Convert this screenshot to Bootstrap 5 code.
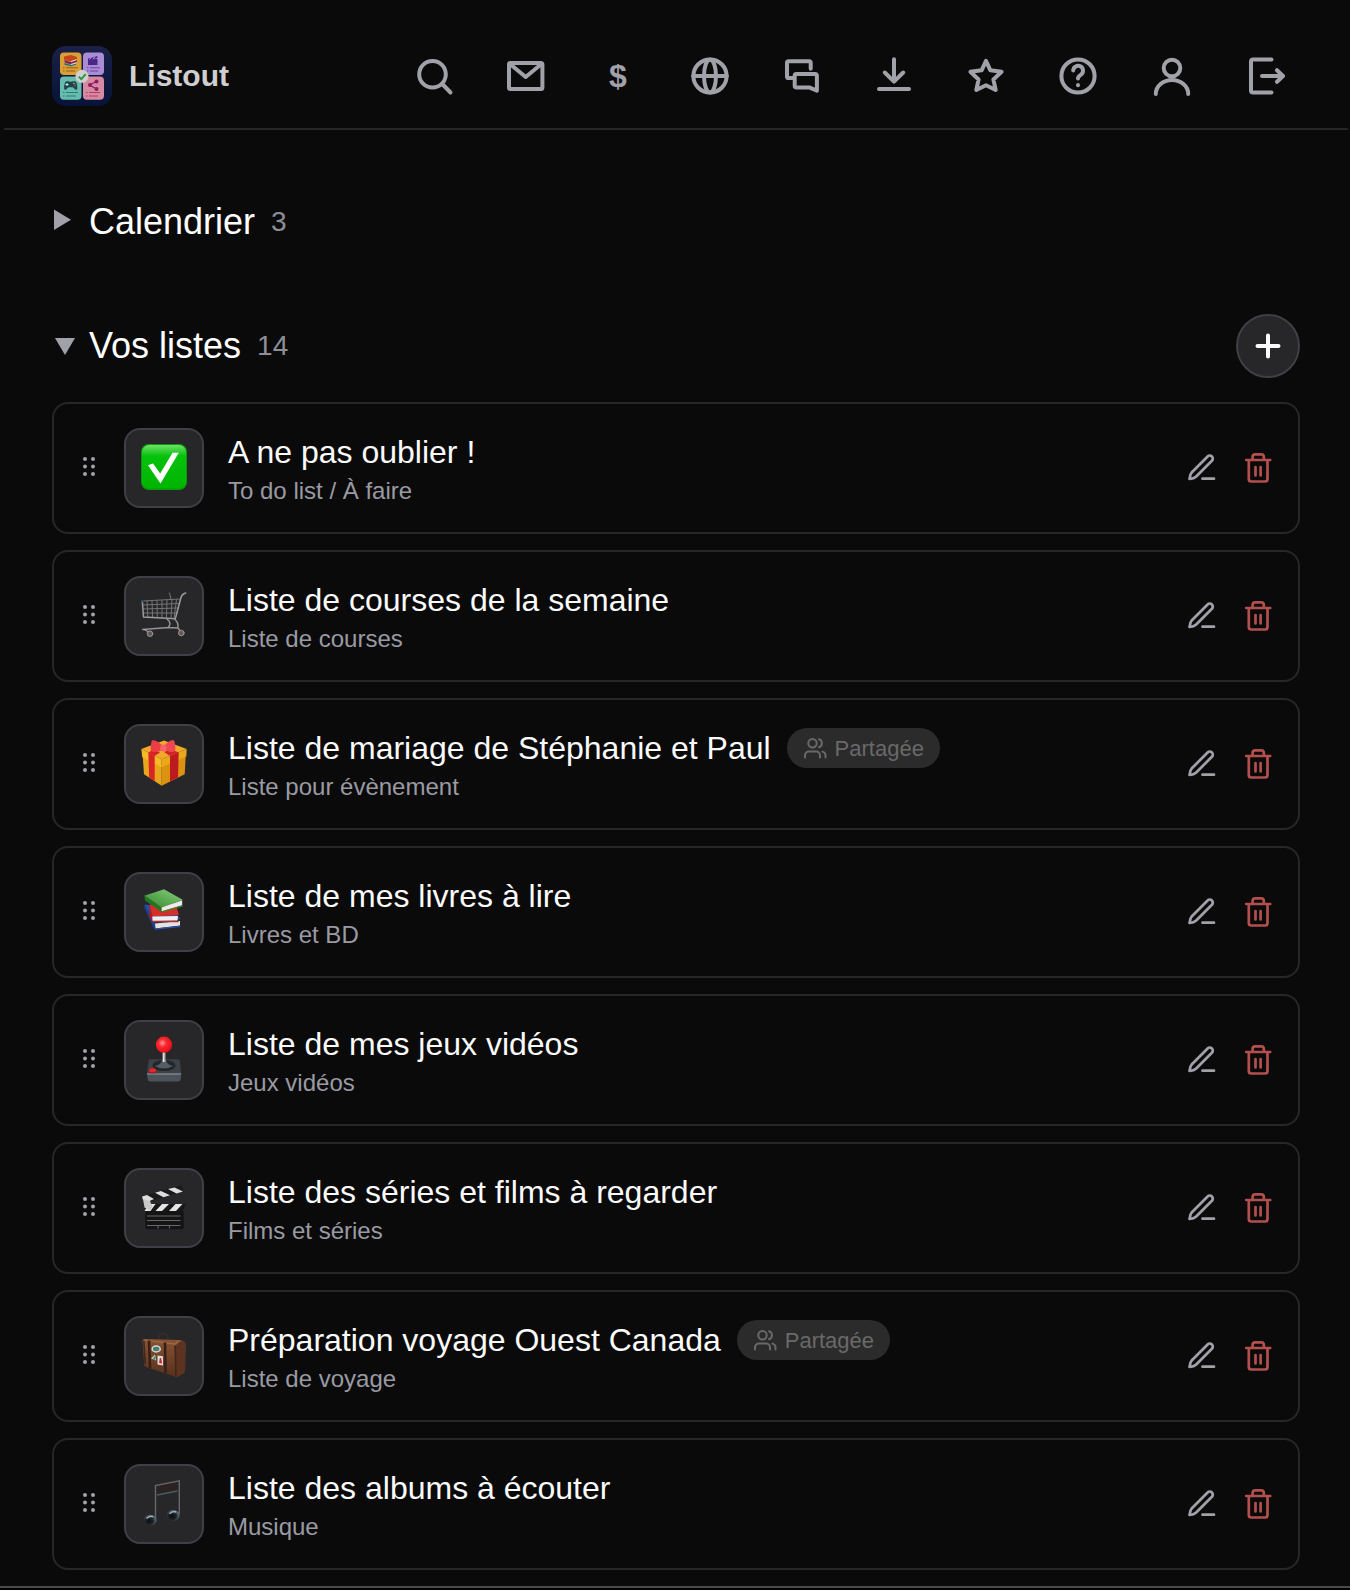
<!DOCTYPE html>
<html lang="fr" data-bs-theme="dark">
<head>
    <meta charset="UTF-8">
    <meta name="viewport" content="width=device-width, initial-scale=1.0">
    <title>Listout</title>
    <link href="https://cdn.jsdelivr.net/npm/bootstrap@5.3.2/dist/css/bootstrap.min.css" rel="stylesheet">
    <style>
        body {
            background: #0a0a0a;
            color: #fafafa;
            font-family: "Liberation Sans", Arial, sans-serif;
        }
        svg {
            display: block;
            overflow: visible;
        }
        button {
            padding: 0;
            border: 0;
            background: none;
            color: inherit;
        }
        .page {
            margin: 0 2px 0 4px;
        }
        .topbar {
            padding: 46px 64px 22px 48px;
            border-bottom: 2px solid #27272a;
        }
        .brand {
            font-size: 30px;
            line-height: 40px;
            font-weight: 700;
            color: #cfcfd1;
            gap: 17px;
        }
        .tools {
            gap: 48px;
            color: #a1a1aa;
        }
        .tools a {
            color: inherit;
            width: 44px;
            height: 44px;
        }
        .tools svg,
        .stroke-icon {
            fill: none;
            stroke: currentColor;
            stroke-width: 4;
            stroke-linecap: round;
            stroke-linejoin: round;
        }
        .dollar {
            font-size: 32px;
            line-height: 44px;
            font-weight: 700;
        }
        .content {
            padding: 60px 48px 16px;
        }
        .section-head {
            height: 64px;
        }
        .section-head + .section-head {
            margin-top: 60px;
        }
        .section-toggle {
            gap: 13px;
        }
        .section-toggle svg {
            fill: #a1a1aa;
        }
        .section-head h2 {
            font-size: 36px;
            line-height: 44px;
            font-weight: 400;
        }
        .count {
            font-size: 28px;
            line-height: 32px;
            color: #8e8e97;
        }
        .add-btn {
            width: 64px;
            height: 64px;
            border: 2px solid #3f3f46;
            background: #27272a;
        }
        .lists {
            margin-top: 24px;
            gap: 16px;
        }
        .list-row {
            padding: 24px;
            gap: 24px;
            border: 2px solid #27272a;
            border-radius: 16px;
        }
        .grip {
            width: 22px;
            fill: #a1a1aa;
            cursor: grab;
        }
        .tile {
            width: 80px;
            height: 80px;
            border: 2px solid #3f3f46;
            border-radius: 16px;
            background: #27272a;
        }
        .texts {
            padding-top: 4px;
        }
        .list-name {
            font-size: 32px;
            line-height: 40px;
            color: #fafafa;
        }
        .kind {
            margin-top: 4px;
            font-size: 24px;
            line-height: 30px;
            color: #9a9aa3;
        }
        .shared {
            height: 40px;
            padding: 0 16px;
            gap: 8px;
            font-size: 22px;
            color: #696969;
            background: #2b2b2b;
        }
        .shared .stroke-icon {
            stroke-width: 2;
        }
        .actions {
            gap: 24px;
            color: #a1a1aa;
        }
        .actions .stroke-icon {
            stroke-width: 2.7;
        }
        .delete {
            color: #b3504e;
        }
        .bottom-edge {
            height: 4px;
            border-top: 2px solid #4a4a4a;
            background: #000;
        }
    </style>
</head>
<body>
    <!-- shared icons -->
    <svg width="0" height="0" class="position-absolute" aria-hidden="true">
        <defs>
            <linearGradient id="gGreen" x1="0" y1="0" x2="0" y2="1">
                <stop offset="0" stop-color="#6fe06a"/><stop offset=".25" stop-color="#06c20c"/><stop offset="1" stop-color="#00b400"/>
            </linearGradient>
            <radialGradient id="gBall" cx=".4" cy=".4" r=".6">
                <stop offset="0" stop-color="#ff9c98"/><stop offset=".4" stop-color="#fb2a2f"/><stop offset="1" stop-color="#e50d1a"/>
            </radialGradient>
            <linearGradient id="gBook" x1="0" y1="1" x2="1" y2="0">
                <stop offset="0" stop-color="#2e8a2c"/><stop offset="1" stop-color="#8ccf7d"/>
            </linearGradient>
            <linearGradient id="gCase" x1="0" y1="0" x2="0" y2="1">
                <stop offset="0" stop-color="#8a5434"/><stop offset="1" stop-color="#56301c"/>
            </linearGradient>
            <radialGradient id="gNote" cx=".4" cy=".6" r=".6">
                <stop offset="0" stop-color="#0b0d0f"/><stop offset=".55" stop-color="#1d2429"/><stop offset="1" stop-color="#60727c"/>
            </radialGradient>
            <linearGradient id="gLogo" x1="0" y1="0" x2="0" y2="1">
                <stop offset="0" stop-color="#1b2047"/><stop offset="1" stop-color="#07133a"/>
            </linearGradient>
        </defs>
        <symbol id="grip" viewBox="0 0 22 24">
            <circle cx="7" cy="3" r="2"/><circle cx="15" cy="3" r="2"/>
            <circle cx="7" cy="10.500" r="2"/><circle cx="15" cy="10.500" r="2"/>
            <circle cx="7" cy="18" r="2"/><circle cx="15" cy="18" r="2"/>
        </symbol>
        <symbol id="pen" viewBox="0 0 32 32">
            <path d="M21.600 4.500a3 3 0 0 1 4.300 4.300L10.200 24.500c-1.800 1.700-4 2.200-6.700 2.400.2-2.700.8-4.900 2.400-6.700zM16.500 26.700H28"/>
        </symbol>
        <symbol id="bin" viewBox="0 0 32 32">
            <path d="M4.200 8H28.200M6.800 8V27a2.500 2.500 0 0 0 2.500 2.500H23a2.500 2.500 0 0 0 2.500-2.500V8M10.600 8V5a2.600 2.600 0 0 1 2.600-2.600h6A2.600 2.600 0 0 1 21.800 5V8M13.500 15v8.500M18.600 15v8.500"/>
        </symbol>
        <symbol id="people" viewBox="0 0 24 24">
            <path d="M17 21.500v-2a4 4 0 0 0-4-4H6a4 4 0 0 0-4 4v2M22.500 21.500v-2a4 4 0 0 0-3-3.900M16 3.200a4.200 4.200 0 0 1 0 8"/>
            <circle cx="9.500" cy="7.200" r="4.200"/>
        </symbol>
    </svg>

    <div class="page">
        <header class="topbar d-flex align-items-center justify-content-between">
            <a href="#" class="brand d-flex align-items-center text-decoration-none">
                <svg width="60" height="60" viewBox="0 0 60 60" aria-hidden="true">
                    <rect width="60" height="60" rx="14" fill="url(#gLogo)"/>
                    <rect x="8" y="6.500" width="21.500" height="22.500" rx="4" fill="#d9a036"/>
                    <rect x="31" y="6.500" width="21" height="22.500" rx="4" fill="#a98bd6"/>
                    <rect x="8" y="30.500" width="21.500" height="23.200" rx="4" fill="#68bcae"/>
                    <rect x="31" y="30.500" width="21" height="23.200" rx="4" fill="#d68aa2"/>
                    <path d="M12 10.500l7-1.500 6 2-7 2.500zM12 10.500v3l6 2 7-2.500v-2l-7 2.500z" fill="#c9431c"/>
                    <path d="M12.500 14l5.500 2 7-2.300v2l-7 2.500-5.500-2z" fill="#7a2462"/>
                    <path d="M12.500 17l5.500 1.800 6-2v2l-5 1.400-6.500-1.500z" fill="#176e80"/>
                    <path d="M19 15.500l5.500-1.700M19 18.500l5.500-1.500" stroke="#e8d8c0" stroke-width="1"/>
                    <path d="M36 13h9.500v6H36zM36 12.500l9-2.500.5 2-9 2z" fill="#482684"/>
                    <path d="M37.500 13.500l2-2.500M41 13.300l2-3" stroke="#b9a4e0" stroke-width="1"/>
                    <path d="M14 35.500c2-.8 3 .3 4.700.3s3-1.100 4.800-.3c1.600.8 2.700 8 1 8.300-1.800.3-2.600-2.600-3.800-2.600h-4c-1.200 0-2 2.900-3.700 2.600-1.700-.3-.7-7.500 1-8.300z" fill="#18474f"/>
                    <path d="M15 37v3M13.500 38.500h3" stroke="#cfe6e1" stroke-width="1"/>
                    <circle cx="22" cy="37.500" r=".8" fill="#e5b73a"/><circle cx="23" cy="39.500" r=".8" fill="#d6533b"/>
                    <path d="M44.500 35.500L37.500 39l7 4" stroke="#8c1c64" stroke-width="1.200" fill="none"/>
                    <circle cx="44.500" cy="35.500" r="2" fill="#8c1c64"/><circle cx="38" cy="39" r="2" fill="#8c1c64"/><circle cx="44.500" cy="43" r="2" fill="#8c1c64"/>
                    <path d="M11 21.700h1.500M14 21.700h12M11 25h1.500M14 25h9" stroke="#9b5c19" stroke-width="1.100"/>
                    <path d="M35 21.700h1.500M38 21.700h10M35 25h1.500M38 25h8" stroke="#6c45a0" stroke-width="1.100"/>
                    <path d="M11 46.500h1.500M14 46.500h12M11 50h1.500M14 50h10" stroke="#267f77" stroke-width="1.100"/>
                    <path d="M34 46.500h1.500M37 46.500h11M34 50h1.500M37 50h9" stroke="#b93861" stroke-width="1.100"/>
                    <circle cx="30" cy="30.300" r="6.500" fill="#cfcfcf"/>
                    <path d="M26.800 30.600l2.500 2.500 4.300-5" stroke="#249541" stroke-width="1.800" fill="none"/>
                </svg>
                <span>Listout</span>
            </a>
            <nav class="tools d-flex align-items-center" aria-label="Outils">
                <a href="#" aria-label="Rechercher"><svg width="44" height="44" viewBox="-2 -2 44 44"><circle cx="18.500" cy="18.200" r="13.300"/><path d="M28.300 28l8.200 8.500"/></svg></a>
                <a href="#" aria-label="Messages"><svg width="44" height="44" viewBox="-2 -2 44 44"><rect x="3" y="7" width="33.400" height="26" rx="1.500"/><path d="M4 8l15.700 13L35.400 8"/></svg></a>
                <a href="#" aria-label="Dons" class="dollar text-center text-decoration-none">$</a>
                <a href="#" aria-label="Langue"><svg width="44" height="44" viewBox="-2 -2 44 44"><circle cx="20" cy="20" r="16.600"/><ellipse cx="20" cy="20" rx="6" ry="16.600"/><path d="M3.200 20h33.600"/></svg></a>
                <a href="#" aria-label="Discussions"><svg width="44" height="44" viewBox="-2 -2 44 44"><path d="M28.700 12.800V6.800a1.600 1.600 0 0 0-1.600-1.600H6.600A1.600 1.600 0 0 0 5 6.800v13.600a1.600 1.600 0 0 0 1.600 1.600h4.600M14.300 18h19a1.600 1.600 0 0 1 1.600 1.600V34.800l-7-3.200H14.300a1.600 1.600 0 0 1-1.600-1.600V19.600a1.600 1.600 0 0 1 1.600-1.600z"/></svg></a>
                <a href="#" aria-label="Installer"><svg width="44" height="44" viewBox="-2 -2 44 44"><path d="M20 3.300V25.500M10.800 16.500L20 25.700l9.200-9.200M5 33h30"/></svg></a>
                <a href="#" aria-label="Favoris"><svg width="44" height="44" viewBox="-2 -2 44 44"><path d="M20 4.800l4.400 9.500 11.200 1.500-8.200 7.700 2.300 10.500L20 29.300l-9.700 4.700 2.300-10.500-8.200-7.700 11.200-1.500z"/></svg></a>
                <a href="#" aria-label="Aide"><svg width="44" height="44" viewBox="-2 -2 44 44"><circle cx="20" cy="20" r="16.600"/><path d="M15.200 14.400a4.900 4.900 0 1 1 7.800 4.200c-1.800 1.200-3 2-3 3.800M20 29v.200"/></svg></a>
                <a href="#" aria-label="Profil"><svg width="44" height="44" viewBox="-4 -2 44 44"><circle cx="20" cy="12" r="8.300"/><path d="M3.800 38a16.200 14 0 0 1 32.400 0"/></svg></a>
                <a href="#" aria-label="Se déconnecter"><svg width="44" height="44" viewBox="-6 -2 44 44"><path d="M25.500 3.400H7a2 2 0 0 0-2 2V34.600a2 2 0 0 0 2 2H25.500M16 20H36.800M31 14.200l6 5.800-6 5.800"/></svg></a>
            </nav>
        </header>

        <main class="content">
            <div class="section-head d-flex align-items-center gap-3">
                <button type="button" class="section-toggle d-flex align-items-center" aria-expanded="false">
                    <svg width="24" height="28" viewBox="0 0 24 28" aria-hidden="true"><path d="M2 1.500V22L19 11.700z"/></svg>
                    <h2 class="m-0">Calendrier</h2>
                </button>
                <span class="count">3</span>
            </div>
            <div class="section-head d-flex align-items-center gap-3">
                <button type="button" class="section-toggle d-flex align-items-center" aria-expanded="true">
                    <svg width="24" height="28" viewBox="0 0 24 28" aria-hidden="true"><path d="M3 6H23L13 23z"/></svg>
                    <h2 class="m-0">Vos listes</h2>
                </button>
                <span class="count">14</span>
                <button type="button" class="add-btn rounded-circle d-flex align-items-center justify-content-center ms-auto" aria-label="Ajouter une liste">
                    <svg class="stroke-icon" width="28" height="28" viewBox="0 0 28 28"><path d="M14 3.500v21M3.500 14h21"/></svg>
                </button>
            </div>

            <div class="lists d-flex flex-column">
                <article class="list-row d-flex align-items-center">
                    <svg class="grip" height="24"><use href="#grip"/></svg>
                    <div class="tile d-flex align-items-center justify-content-center flex-shrink-0">
                        <svg width="48" height="48" viewBox="0 0 48 48">
                            <rect x="1" y="0" width="46" height="46" rx="8" fill="#079c07"/>
                            <rect x="2" y="1" width="44" height="43.500" rx="7" fill="url(#gGreen)"/>
                            <path d="M8 21.300l5-1.700 7.200 10L32.500 8.700h6.300L20.500 39.500z" fill="#fff"/>
                        </svg>
                    </div>
                    <div class="texts align-self-start flex-grow-1">
                        <a href="#" class="list-name d-block text-decoration-none">A ne pas oublier !</a>
                        <div class="kind">To do list / À faire</div>
                    </div>
                    <div class="actions d-flex">
                        <button type="button" aria-label="Modifier"><svg class="stroke-icon" width="32" height="32"><use href="#pen"/></svg></button>
                        <button type="button" class="delete" aria-label="Supprimer"><svg class="stroke-icon" width="32" height="32"><use href="#bin"/></svg></button>
                    </div>
                </article>

                <article class="list-row d-flex align-items-center">
                    <svg class="grip" height="24"><use href="#grip"/></svg>
                    <div class="tile d-flex align-items-center justify-content-center flex-shrink-0">
                        <svg width="48" height="48" viewBox="0 0 48 48" fill="none" stroke-linecap="round">
                            <path d="M2.500 9L40 7M2.500 13l37 -1.500M3 17l35.500-1M3 21l34.500 0M7 9l.8 16M12 9l.6 16M17 8.500l.3 17M22 8.500v17.300M27 8l-.5 18M32 7.500L31 26.500M36.500 7.500L34 27M29.500 1l1.500 6" stroke="#747476" stroke-width="1"/>
                            <path d="M45.700 1c-3 .8-4.300 2.500-5 5.500l-5.400 20.200L3.500 25 2.300 9" stroke="#9b9b9d" stroke-width="1.500"/>
                            <path d="M34.500 27c2.500 2 4 4 3.500 9M27 27c4 3 3.500 6 1 8.500L2.700 37.500M28 35.500l10 .5 3 4" stroke="#929294" stroke-width="1.500"/>
                            <circle cx="10" cy="41.700" r="2.800" fill="#655a57" stroke="#9c938f"/><circle cx="41.300" cy="41" r="2.800" fill="#655a57" stroke="#9c938f"/>
                            <path d="M4 37.500l4 2" stroke="#bbb"/><circle cx="3" cy="9" r="1.300" fill="#25516b"/>
                        </svg>
                    </div>
                    <div class="texts align-self-start flex-grow-1">
                        <a href="#" class="list-name d-block text-decoration-none">Liste de courses de la semaine</a>
                        <div class="kind">Liste de courses</div>
                    </div>
                    <div class="actions d-flex">
                        <button type="button" aria-label="Modifier"><svg class="stroke-icon" width="32" height="32"><use href="#pen"/></svg></button>
                        <button type="button" class="delete" aria-label="Supprimer"><svg class="stroke-icon" width="32" height="32"><use href="#bin"/></svg></button>
                    </div>
                </article>

                <article class="list-row d-flex align-items-center">
                    <svg class="grip" height="24"><use href="#grip"/></svg>
                    <div class="tile d-flex align-items-center justify-content-center flex-shrink-0">
                        <svg width="48" height="48" viewBox="0 0 48 48">
                            <path d="M2.700 16l19 9v20.700L4 34.300z" fill="#e9a51c"/>
                            <path d="M21.700 25l24-9-1 18.300-23 11.400z" fill="#dc9211"/>
                            <path d="M1.300 9L24 .5 46.700 9l-25 10.300z" fill="#f2a929"/>
                            <path d="M1.300 9l20.400 10.300v8L2.300 17.300z" fill="#f7ba27"/>
                            <path d="M21.700 19.300L46.700 9l-.4 7.500-24.600 10.800z" fill="#eaa81b"/>
                            <path d="M8.300 12.500l6.400 3.300v25.400l-5.500-3.500z" fill="#d92325"/>
                            <path d="M30 15.900l8.700-3.600-.7 25.300-8 4z" fill="#bd1a20"/>
                            <path d="M8.300 12.500L14 9.500l6 3-5.300 3.300zM30 15.900l-6-4 6-2.500 8.700 2.900z" fill="#d42327"/>
                            <path d="M22.500 5.500C17 .5 12-1 11.500 1.500c-.2 3-1.500 6.500-.5 9.500 4 2 9 .5 12-1.800z" fill="#ed3e46"/>
                            <path d="M24.500 5.500C29 0 34-1 34.500 1.500c.3 3 1.700 6.500.5 9.500-4 2-8 .3-11-2z" fill="#f04850"/>
                            <ellipse cx="23.300" cy="8" rx="3.200" ry="3.500" fill="#f8646a"/>
                        </svg>
                    </div>
                    <div class="texts align-self-start flex-grow-1">
                        <div class="d-flex align-items-center gap-3">
                            <a href="#" class="list-name text-decoration-none">Liste de mariage de Stéphanie et Paul</a>
                            <span class="shared rounded-pill d-flex align-items-center"><svg class="stroke-icon" width="24" height="24"><use href="#people"/></svg>Partagée</span>
                        </div>
                        <div class="kind">Liste pour évènement</div>
                    </div>
                    <div class="actions d-flex">
                        <button type="button" aria-label="Modifier"><svg class="stroke-icon" width="32" height="32"><use href="#pen"/></svg></button>
                        <button type="button" class="delete" aria-label="Supprimer"><svg class="stroke-icon" width="32" height="32"><use href="#bin"/></svg></button>
                    </div>
                </article>

                <article class="list-row d-flex align-items-center">
                    <svg class="grip" height="24"><use href="#grip"/></svg>
                    <div class="tile d-flex align-items-center justify-content-center flex-shrink-0">
                        <svg width="48" height="48" viewBox="0 0 48 48">
                            <path d="M4.300 16.500L30 20l10.700 11-26 3z" fill="#294fa8"/>
                            <path d="M4.300 16.500l11 18.500v6.500L13.500 40 4.500 20z" fill="#1d3f94"/>
                            <path d="M15 35.500l25-2.500v4.500l-24.500 3z" fill="#e3e3e3"/>
                            <path d="M14.500 40.500l26-2.800v1.300L15 41.800z" fill="#2a50b4"/>
                            <path d="M9.500 16.500l26-1 3.500 11.500-26.500 1.500z" fill="#d82e28"/>
                            <path d="M9.500 16.500l3 12 .5 6-3.500-5.500z" fill="#b21b1c"/>
                            <path d="M12.300 28.500l25.700-.5-.5 4.500-25 .3z" fill="#efefef"/>
                            <path d="M12 33h26.500v1.300H13z" fill="#c52621"/>
                            <path d="M4.300 7.700L24 1.300 42.700 11.700 21.700 19.500z" fill="url(#gBook)"/>
                            <path d="M4.300 7.700l17.400 11.800v4.800L5 12.500z" fill="#247422"/>
                            <path d="M21.700 19.500l20.500-7.200v5l-20.500 6z" fill="#ebebeb"/>
                            <path d="M21.700 23.300l21-6v1.200l-21 6z" fill="#2f8b2c"/>
                        </svg>
                    </div>
                    <div class="texts align-self-start flex-grow-1">
                        <a href="#" class="list-name d-block text-decoration-none">Liste de mes livres à lire</a>
                        <div class="kind">Livres et BD</div>
                    </div>
                    <div class="actions d-flex">
                        <button type="button" aria-label="Modifier"><svg class="stroke-icon" width="32" height="32"><use href="#pen"/></svg></button>
                        <button type="button" class="delete" aria-label="Supprimer"><svg class="stroke-icon" width="32" height="32"><use href="#bin"/></svg></button>
                    </div>
                </article>

                <article class="list-row d-flex align-items-center">
                    <svg class="grip" height="24"><use href="#grip"/></svg>
                    <div class="tile d-flex align-items-center justify-content-center flex-shrink-0">
                        <svg width="48" height="48" viewBox="0 0 48 48">
                            <path d="M10.500 23.300h27.300q1.700 0 2 1.700l1.500 13H7l1.500-13q.3-1.700 2-1.700z" fill="#3c4247"/>
                            <path d="M7 37.500h34.300l-.5 5.500q-.3 2.500-3 2.500H10.500q-2.500 0-2.800-2.500z" fill="#4c535a"/>
                            <path d="M7 38h34" stroke="#7b8288" stroke-width="1.300"/>
                            <ellipse cx="24" cy="29.500" rx="11.500" ry="5.500" fill="#23272a"/>
                            <path d="M15 30q7-2 7-6h4q0 4 7 6-9 5-18 0z" fill="#565c61"/>
                            <path d="M24 16v10" stroke="#aaaeb0" stroke-width="3"/><path d="M23.500 16v10" stroke="#e0e2e3" stroke-width="1"/>
                            <circle cx="24" cy="8.700" r="8.100" fill="url(#gBall)"/>
                            <ellipse cx="12.700" cy="35" rx="3.700" ry="2.500" fill="#a81118"/><ellipse cx="12.700" cy="34.200" rx="3.500" ry="2" fill="#e52529"/>
                        </svg>
                    </div>
                    <div class="texts align-self-start flex-grow-1">
                        <a href="#" class="list-name d-block text-decoration-none">Liste de mes jeux vidéos</a>
                        <div class="kind">Jeux vidéos</div>
                    </div>
                    <div class="actions d-flex">
                        <button type="button" aria-label="Modifier"><svg class="stroke-icon" width="32" height="32"><use href="#pen"/></svg></button>
                        <button type="button" class="delete" aria-label="Supprimer"><svg class="stroke-icon" width="32" height="32"><use href="#bin"/></svg></button>
                    </div>
                </article>

                <article class="list-row d-flex align-items-center">
                    <svg class="grip" height="24"><use href="#grip"/></svg>
                    <div class="tile d-flex align-items-center justify-content-center flex-shrink-0">
                        <svg width="48" height="48" viewBox="0 0 48 48">
                            <path d="M2 12.500L41.500 1l1.700 6.500L5 19z" fill="#1b1b1b"/>
                            <path d="M2 12.500l5-1.500 7 4L8 17.700 3 16zM15 8.800l6-1.900 9 4.300-6.500 2zM28 5l6.500-1.500 8.500 4-6.500 2z" fill="#dedede"/>
                            <path d="M5 20h40.500L43 27H5z" fill="#171717"/>
                            <path d="M9 20h6.500l-5 7H4.500zM22 20h7l-7 7h-6.500zM35.500 20h7l-6.500 7h-7z" fill="#e4e4e4"/>
                            <path d="M3 15l7 2 2.500 6-3 3.500-5-3z" fill="#c9c9ca"/>
                            <rect x="5.300" y="27" width="38.400" height="18.300" rx="2" fill="#141414"/>
                            <path d="M7 32h33.500M7 36.500h33.500M7 41.500h33.500M18 41.500v3M29.500 41.500v3" stroke="#67676a" stroke-width="1.100"/>
                        </svg>
                    </div>
                    <div class="texts align-self-start flex-grow-1">
                        <a href="#" class="list-name d-block text-decoration-none">Liste des séries et films à regarder</a>
                        <div class="kind">Films et séries</div>
                    </div>
                    <div class="actions d-flex">
                        <button type="button" aria-label="Modifier"><svg class="stroke-icon" width="32" height="32"><use href="#pen"/></svg></button>
                        <button type="button" class="delete" aria-label="Supprimer"><svg class="stroke-icon" width="32" height="32"><use href="#bin"/></svg></button>
                    </div>
                </article>

                <article class="list-row d-flex align-items-center">
                    <svg class="grip" height="24"><use href="#grip"/></svg>
                    <div class="tile d-flex align-items-center justify-content-center flex-shrink-0">
                        <svg width="48" height="48" viewBox="0 0 48 48">
                            <path d="M18.500 7.500C18.500-1 28-1 28 8" fill="none" stroke="#382c27" stroke-width="1.800"/>
                            <path d="M2.500 8.500Q2.500 7 5 7l34 1 4.500 1q2 1 2 4L45 39q-.2 1.500-1.500 2.200L37 45.300 6 35q-1.700-.7-1.800-2.500z" fill="url(#gCase)"/>
                            <path d="M35.500 14q3-4.500 8-5 2 1 2 4L45 39q-.2 1.500-1.500 2.200L36.500 45z" fill="#5c3320"/>
                            <path d="M4 8l31 4 4-3.500" fill="none" stroke="#a06a45" stroke-width="1.200"/>
                            <path d="M9 8.500l1 27.500M25 10.500l.5 30.500" stroke="#35201a" stroke-width="2.600"/>
                            <path d="M35 13.500l1 30.500M3.800 9l1.400 23" stroke="#41261a" stroke-width="1.600"/>
                            <ellipse cx="16.200" cy="17" rx="4.800" ry="3.700" fill="#d5d8cc"/><ellipse cx="16.200" cy="17" rx="3.200" ry="2.200" fill="#3f7188"/><path d="M14 18.500l3-2 2.500 1.500z" fill="#71893f"/>
                            <path d="M11 26.500l4-4 1 6z" fill="#b8d2ba"/><path d="M13 27l2-3v4z" fill="#26856d"/>
                            <path d="M17.500 23.500l5.500.7v9.300l-5.500-1z" fill="#d6dbd7"/><path d="M19.800 26l1.300 0 1 5.500-3-.5z" fill="#c9242a"/>
                        </svg>
                    </div>
                    <div class="texts align-self-start flex-grow-1">
                        <div class="d-flex align-items-center gap-3">
                            <a href="#" class="list-name text-decoration-none">Préparation voyage Ouest Canada</a>
                            <span class="shared rounded-pill d-flex align-items-center"><svg class="stroke-icon" width="24" height="24"><use href="#people"/></svg>Partagée</span>
                        </div>
                        <div class="kind">Liste de voyage</div>
                    </div>
                    <div class="actions d-flex">
                        <button type="button" aria-label="Modifier"><svg class="stroke-icon" width="32" height="32"><use href="#pen"/></svg></button>
                        <button type="button" class="delete" aria-label="Supprimer"><svg class="stroke-icon" width="32" height="32"><use href="#bin"/></svg></button>
                    </div>
                </article>

                <article class="list-row d-flex align-items-center">
                    <svg class="grip" height="24"><use href="#grip"/></svg>
                    <div class="tile d-flex align-items-center justify-content-center flex-shrink-0">
                        <svg width="48" height="48" viewBox="0 0 48 48">
                            <path d="M14.700 5.500l25-5V11l-24 4.300z" fill="#2b2222"/>
                            <path d="M15.500 38V5.500L39.300.8V34" fill="none" stroke="#66666b" stroke-width="1.400"/>
                            <path d="M17 15l20.500-4" fill="none" stroke="#4b5a62" stroke-width="1.400"/>
                            <ellipse cx="10.300" cy="40" rx="6.200" ry="5.200" fill="url(#gNote)"/>
                            <ellipse cx="33.300" cy="35.300" rx="6.200" ry="5.200" fill="url(#gNote)"/>
                            <path d="M6.500 38.500q3-3 6.500-1.800M29.500 33.800q3-3 6.500-1.800" fill="none" stroke="#a9b8be" stroke-width="1.400"/>
                        </svg>
                    </div>
                    <div class="texts align-self-start flex-grow-1">
                        <a href="#" class="list-name d-block text-decoration-none">Liste des albums à écouter</a>
                        <div class="kind">Musique</div>
                    </div>
                    <div class="actions d-flex">
                        <button type="button" aria-label="Modifier"><svg class="stroke-icon" width="32" height="32"><use href="#pen"/></svg></button>
                        <button type="button" class="delete" aria-label="Supprimer"><svg class="stroke-icon" width="32" height="32"><use href="#bin"/></svg></button>
                    </div>
                </article>
            </div>
        </main>
    </div>
    <div class="bottom-edge"></div>

    <script src="https://cdn.jsdelivr.net/npm/bootstrap@5.3.2/dist/js/bootstrap.bundle.min.js"></script>
</body>
</html>
